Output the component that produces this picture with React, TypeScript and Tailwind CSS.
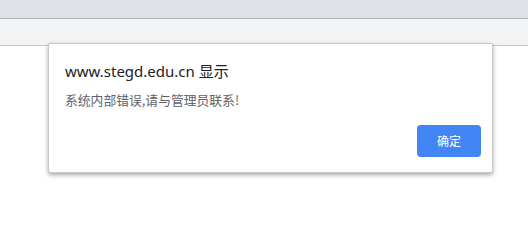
export default function App() {
  return (
    <div className="relative w-[528px] h-[245px] bg-white overflow-hidden" style={{ fontFamily: '"Noto Sans", "Noto Sans CJK SC", sans-serif' }}>
      {/* browser chrome */}
      <div className="h-[19px] bg-[#dee1e6] border-b border-[#b0b2b5]" />
      <div className="h-[27px] bg-[#f1f3f4] border-b border-[#c4c6c8]" />

      {/* alert dialog */}
      <div className="absolute left-[48px] top-[43px] w-[445px] h-[130px] bg-white border border-[#c8c8c8] rounded-[2px] shadow-[0_2px_4px_rgba(0,0,0,0.35)] flex flex-col">
        <div className="pl-[16px] pt-[16px] text-[15px] leading-[22px] text-[#202124]">www.stegd.edu.cn 显示</div>
        <div className="pl-[16px] pt-[9px] text-[12.8px] leading-[18px] text-[#5f6368]" style={{ fontFamily: '"Noto Sans CJK SC", sans-serif' }}>
          系统内部错误,请与管理员联系!
        </div>
        <div className="flex justify-end pr-[11px] mt-auto pb-[15px]">
          <button className="w-[64px] h-[32px] rounded-[4px] bg-[#4285f4] text-white text-[12px]" style={{ fontFamily: '"Noto Sans CJK SC", sans-serif' }}>
            确定
          </button>
        </div>
      </div>
    </div>
  )
}
